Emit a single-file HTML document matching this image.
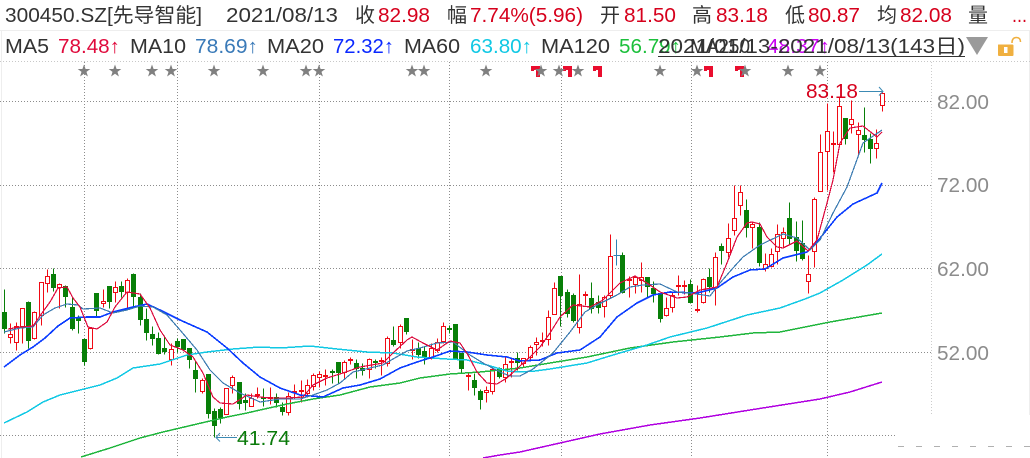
<!DOCTYPE html>
<html><head><meta charset="utf-8"><style>
html,body{margin:0;padding:0;background:#fff;width:1030px;height:458px;overflow:hidden}
svg{display:block}
text{font-family:"Liberation Sans","Noto Sans CJK SC",sans-serif;font-size:20px}
.d{fill:#333}.r{fill:#d6001c}.l{fill:#8c8c8c}
</style></head><body>
<svg width="1030" height="458" viewBox="0 0 1030 458" xmlns="http://www.w3.org/2000/svg">
<defs><path id="s" d="M0-6.5 1.6-2 6.3-2 2.5.9 3.9 5.5 0 2.7-3.9 5.5-2.5.9-6.3-2-1.6-2Z" fill="#808080"/>
<path id="f" d="M0 0H9V11H5V4H3V5H0Z" fill="#ea0d2e"/></defs>

<!-- frame / grid -->
<path d="M0 30.5H1030M1.5 30V458M1029.5 30V415" stroke="#eeeeee" fill="none"/>
<path d="M0 61.5H1030" stroke="#c8c8c8" stroke-dasharray="1 2" fill="none"/>
<g shape-rendering="crispEdges">
<path d="M0 101.5H931M0 185.5H931M0 268.5H931M0 352.5H931M0 435.5H896" stroke="#8c8c8c" stroke-dasharray="1 2" fill="none"/>
<path d="M84.5 62V458M177.5 62V458M319.5 62V458M449.5 62V458M561.5 62V458M691.5 62V458M827.5 62V458" stroke="#8c8c8c" stroke-dasharray="1 2" fill="none"/>
<path d="M931.5 62V415" stroke="#ccc" stroke-dasharray="1 2" fill="none"/>
</g>
<path d="M898 446.5H1030" stroke="#b0b0b0" stroke-dasharray="6 12" fill="none"/>

<!-- candles -->
<g transform="translate(.5 .5)" shape-rendering="crispEdges" stroke-width="1">
<path stroke="#087f08" fill="none" d="M4 289V333M28 301V348M53 268V291M65 285V307M72 297V330M78 315V333M84 338V365M96 293V317M109 286V308M121 281V297M133 273V307M140 293V325M146 308V340M152 326V345M158 332V354M164 335V354M177 338V352M183 339V350M189 348V368M195 361V392M208 374V418M214 408V437M220 407V423M239 382V409M245 393V410M263 388V406M276 393V407M282 402V415M332 369V383M338 362V383M356 359V378M362 363V375M375 359V368M393 326V346M406 318V334M418 342V358M424 346V364M449 325V333M455 324V359M461 353V373M474 373V395M480 389V409M499 367V378M517 352V370M560 276V326M567 289V317M573 293V322M591 282V313M598 295V313M622 252V293M647 277V297M653 281V302M660 293V322M690 279V303M709 268V292M721 243V264M746 199V237M759 222V266M789 202V245M796 221V261M802 220V260M845 118V144M864 107V152M870 133V163"/>
<path stroke="#087f08" fill="#087f08" d="M2 312h4V328h-4zM26 302h4V340h-4zM51 274h4V287h-4zM63 286h4V296h-4zM70 307h4V328h-4zM76 317h4V320h-4zM82 339h4V361h-4zM94 293h4V310h-4zM107 286h4V301h-4zM119 286h4V291h-4zM131 274h4V296h-4zM138 297h4V319h-4zM144 319h4V332h-4zM150 334h4V338h-4zM156 338h4V353h-4zM162 348h4V351h-4zM175 341h4V346h-4zM181 339h4V349h-4zM187 348h4V359h-4zM193 370h4V378h-4zM206 374h4V413h-4zM212 411h4V425h-4zM218 409h4V417h-4zM237 382h4V403h-4zM243 400h4V402h-4zM261 397h4V398h-4zM274 397h4V402h-4zM280 407h4V411h-4zM330 371h4V372h-4zM336 362h4V372h-4zM354 363h4V368h-4zM360 368h4V370h-4zM373 361h4V362h-4zM391 340h4V344h-4zM404 318h4V331h-4zM416 348h4V354h-4zM422 351h4V357h-4zM447 328h4V329h-4zM453 324h4V358h-4zM459 353h4V368h-4zM472 380h4V387h-4zM478 391h4V399h-4zM497 368h4V376h-4zM515 358h4V362h-4zM558 276h4V295h-4zM565 292h4V313h-4zM571 295h4V320h-4zM589 298h4V308h-4zM596 302h4V307h-4zM620 255h4V292h-4zM645 277h4V286h-4zM651 288h4V293h-4zM658 293h4V318h-4zM688 284h4V302h-4zM707 277h4V286h-4zM719 246h4V250h-4zM744 210h4V227h-4zM757 227h4V262h-4zM787 218h4V238h-4zM794 237h4V250h-4zM800 243h4V258h-4zM843 118h4V138h-4zM862 135h4V139h-4zM868 139h4V148h-4z"/>
<path stroke="#f00a14" fill="none" d="M10 323V343M16 322V350M22 308V343M34 311V339M41 282V325M47 269V292M59 283V308M90 328V349M103 289V307M115 281V302M127 278V308M171 343V365M202 378V393M226 388V414M232 375V393M251 393V406M257 387V398M270 387V404M288 392V415M294 384V398M301 380V402M307 379V397M313 373V390M319 371V387M325 369V385M344 360V378M350 357V364M369 358V378M381 357V375M387 336V366M400 324V348M412 339V359M431 343V359M437 338V352M443 322V343M468 373V390M486 386V402M492 367V394M505 357V382M511 357V377M523 358V367M530 345V360M536 337V355M542 332V346M548 310V345M554 282V314M579 274V333M585 291V305M604 295V317M610 234V297M629 276V297M635 275V293M641 262V292M666 297V316M672 292V312M678 275V295M684 280V294M697 285V312M703 278V303M715 252V305M728 223V257M734 185V235M740 185V215M752 222V248M765 253V271M771 248V267M777 224V264M783 227V247M808 255V293M814 197V267M820 134V191M827 103V190M833 131V172M839 97V145M851 100V133M858 122V156M876 129V158M882 92V111"/>
<path stroke="#f00a14" fill="#fff" d="M8 334h4V337h-4zM14 326h4V342h-4zM20 308h4V326h-4zM32 312h4V338h-4zM39 282h4V315h-4zM45 276h4V283h-4zM57 284h4V287h-4zM88 328h4V348h-4zM101 301h4V303h-4zM113 287h4V292h-4zM125 280h4V292h-4zM169 349h4V359h-4zM200 380h4V391h-4zM224 388h4V414h-4zM230 377h4V385h-4zM249 398h4V406h-4zM255 394h4V395h-4zM268 397h4V398h-4zM286 396h4V412h-4zM292 391h4V392h-4zM299 390h4V391h-4zM305 385h4V393h-4zM311 375h4V386h-4zM317 374h4V377h-4zM323 375h4V376h-4zM342 362h4V372h-4zM348 359h4V360h-4zM367 359h4V369h-4zM379 360h4V361h-4zM385 338h4V363h-4zM398 326h4V342h-4zM410 349h4V350h-4zM429 348h4V358h-4zM435 342h4V350h-4zM441 326h4V341h-4zM466 375h4V376h-4zM484 390h4V392h-4zM490 369h4V391h-4zM503 364h4V377h-4zM509 361h4V362h-4zM521 358h4V363h-4zM528 347h4V357h-4zM534 342h4V344h-4zM540 340h4V341h-4zM546 317h4V339h-4zM552 288h4V314h-4zM577 304h4V327h-4zM583 294h4V295h-4zM602 297h4V306h-4zM608 256h4V295h-4zM627 279h4V280h-4zM633 277h4V284h-4zM639 277h4V280h-4zM664 308h4V315h-4zM670 295h4V307h-4zM676 285h4V286h-4zM682 285h4V286h-4zM695 309h4V310h-4zM701 279h4V302h-4zM713 257h4V287h-4zM726 238h4V252h-4zM732 218h4V230h-4zM738 192h4V205h-4zM750 224h4V227h-4zM763 264h4V268h-4zM769 254h4V266h-4zM775 234h4V251h-4zM781 232h4V238h-4zM806 274h4V281h-4zM812 199h4V251h-4zM818 152h4V191h-4zM825 131h4V151h-4zM831 143h4V144h-4zM837 106h4V144h-4zM849 119h4V124h-4zM856 130h4V134h-4zM874 143h4V148h-4zM880 93h4V105h-4z"/>
<path stroke="#2f82b4" fill="none" d="M616 239V265M613 255H620"/>
</g>

<!-- moving averages -->
<g fill="none" stroke-width="1.2" stroke-linejoin="round" shape-rendering="crispEdges">
<polyline stroke="#b000e0" stroke-width="1.5" points="483,458 500,455 520,452 560,443 600,434 650,425 700,418 750,410 820,399 850,392 882,382"/>
<polyline stroke="#1fb53c" stroke-width="1.5" points="81,457 110,448 140,438 163,432 197,424 227,417 247,413 260,410 287,404 313,399 340,395 370,387 400,383 420,378 450,374 480,372 520,368 550,363 587,357 630,348 673,342 720,337 753,333 780,332 830,322 882,313"/>
<polyline stroke="#10c8e4" stroke-width="1.5" points="4,423 27,412 43,402 60,395 80,390 100,385 117,378 133,368 160,364 187,355 207,352 233,349 260,347 280,348 310,346 337,349 367,352 393,353 417,357 447,359 467,360 487,365 507,371 520,372 535,371 550,369 587,363 613,355 647,345 670,337 707,328 747,315 780,308 805,299 820,293 843,280 867,265 882,254"/>
<polyline stroke="#0a3cff" stroke-width="1.6" points="4,367 20,355 33,347 45,338 58,326 70,318 87,317 100,317 113,312 133,307 147,304 160,310 180,320 207,332 227,348 243,363 260,377 280,388 300,395 323,397 343,388 360,385 380,379 400,368 417,362 433,357 450,351 467,352 487,355 507,357 520,361 540,360 557,353 580,350 600,337 617,317 637,303 653,295 670,292 697,293 717,288 733,277 750,270 765,269 783,258 807,252 817,242 837,217 853,204 877,193 882,183"/>
<polyline stroke="#3a7ab0" points="4,332 20,328 33,327 43,315 55,308 67,304 78,305 83,309 100,308 113,313 127,310 140,306 153,307 167,315 180,330 197,350 210,370 223,383 240,393 260,402 280,399 300,399 313,395 327,390 340,383 353,372 370,368 383,365 393,359 407,351 420,348 437,343 453,342 470,355 483,363 500,372 510,376 520,376 533,369 553,353 570,332 585,312 597,305 617,295 630,287 643,285 660,284 677,292 690,293 710,296 720,283 733,268 743,257 760,245 783,234 797,238 810,250 820,240 833,213 847,187 863,143 882,130"/>
<polyline stroke="#dc0a3c" points="8,329 20,327 33,326 42,313 50,302 58,288 67,287 73,298 80,307 88,327 97,329 107,322 115,307 127,292 140,294 150,308 160,330 170,345 183,350 193,357 203,373 213,397 220,403 233,404 247,395 260,397 270,398 288,398 303,397 313,385 327,378 343,373 360,367 383,363 393,353 407,340 412,337 423,343 437,350 450,341 460,343 468,355 477,372 487,383 497,384 507,378 520,366 530,357 540,347 550,333 560,317 573,305 590,307 603,300 620,283 635,276 647,283 660,292 677,298 687,297 700,290 717,287 727,263 737,237 747,223 752,222 760,224 767,237 777,247 783,248 797,241 808,251 817,240 827,203 833,180 840,143 850,128 863,126 877,137 882,132"/>
</g>

<!-- annotations -->
<path d="M859 91.5H883M879 87l4 4.500-4 4M237 437.500H216M220 433l-4 4.500 4 4" stroke="#3c8ab4" fill="none"/>
<text x="806" y="98" class="r" textLength="52" lengthAdjust="spacingAndGlyphs">83.18</text>
<text x="237" y="445" fill="#0a7a0a" textLength="53" lengthAdjust="spacingAndGlyphs">41.74</text>

<!-- stars -->
<use href="#s" x="84" y="71"/><use href="#s" x="115" y="71"/><use href="#s" x="152" y="71"/><use href="#s" x="171" y="71"/><use href="#s" x="214" y="71"/><use href="#s" x="263" y="71"/><use href="#s" x="306" y="71"/><use href="#s" x="319" y="71"/><use href="#s" x="412" y="71"/><use href="#s" x="424" y="71"/><use href="#s" x="486" y="71"/>
<use href="#f" x="531" y="66"/><use href="#f" x="563" y="66"/><use href="#f" x="593" y="66"/><use href="#f" x="704" y="66"/><use href="#f" x="735" y="66"/>
<use href="#s" x="541" y="71"/><use href="#s" x="559" y="71"/><use href="#s" x="578" y="71"/><use href="#s" x="660" y="71"/><use href="#s" x="697" y="71"/><use href="#s" x="745" y="71"/><use href="#s" x="788" y="71"/><use href="#s" x="820" y="71"/>

<!-- header row -->
<text x="5" y="22" class="d" textLength="197" lengthAdjust="spacingAndGlyphs">300450.SZ[先导智能]</text>
<text x="226" y="22" class="d" textLength="112" lengthAdjust="spacingAndGlyphs">2021/08/13</text>
<text x="355" y="22" class="d" font-size="19">收</text><text x="378" y="22" class="r" textLength="52" lengthAdjust="spacingAndGlyphs">82.98</text>
<text x="447" y="22" class="d">幅</text><text x="470" y="22" class="r" textLength="113" lengthAdjust="spacingAndGlyphs">7.74%(5.96)</text>
<text x="600" y="22" class="d">开</text><text x="624" y="22" class="r" textLength="52" lengthAdjust="spacingAndGlyphs">81.50</text>
<text x="692" y="22" class="d">高</text><text x="716" y="22" class="r" textLength="52" lengthAdjust="spacingAndGlyphs">83.18</text>
<text x="785" y="22" class="d">低</text><text x="808" y="22" class="r" textLength="52" lengthAdjust="spacingAndGlyphs">80.87</text>
<text x="877" y="22" class="d">均</text><text x="900" y="22" class="r" textLength="52" lengthAdjust="spacingAndGlyphs">82.08</text>
<text x="968" y="22" class="d">量</text><text x="1012" y="22" class="r" textLength="15" lengthAdjust="spacingAndGlyphs">...</text>

<!-- MA row -->
<text x="5" y="53" class="d" textLength="44" lengthAdjust="spacingAndGlyphs">MA5</text><text x="58" y="53" fill="#e00a3c" textLength="62" lengthAdjust="spacingAndGlyphs">78.48↑</text>
<text x="130" y="53" class="d" textLength="56" lengthAdjust="spacingAndGlyphs">MA10</text><text x="195" y="53" fill="#3a7ab8" textLength="63" lengthAdjust="spacingAndGlyphs">78.69↑</text>
<text x="267" y="53" class="d" textLength="57" lengthAdjust="spacingAndGlyphs">MA20</text><text x="333" y="53" fill="#0a28ff" textLength="61" lengthAdjust="spacingAndGlyphs">72.32↑</text>
<text x="404" y="53" class="d" textLength="56" lengthAdjust="spacingAndGlyphs">MA60</text><text x="470" y="53" fill="#10c8e4" textLength="62" lengthAdjust="spacingAndGlyphs">63.80↑</text>
<text x="541" y="53" class="d" textLength="69" lengthAdjust="spacingAndGlyphs">MA120</text><text x="619" y="53" fill="#1cc03c" textLength="62" lengthAdjust="spacingAndGlyphs">56.79↑</text>
<text x="690" y="53" class="d" textLength="60" lengthAdjust="spacingAndGlyphs">MA250</text><text x="767" y="53" fill="#c800f0" textLength="63" lengthAdjust="spacingAndGlyphs">48.37↑</text>
<text x="658" y="53" class="d" textLength="307" lengthAdjust="spacingAndGlyphs">2021/01/13-2021/08/13(143日)</text>
<path d="M658 56.500H965" stroke="#333" fill="none"/>

<!-- triangle + lock -->
<path d="M966 37H988L977 55Z" fill="#9a9a9a"/>
<path d="M998.500 44.500H1012.500C1013 44.500 1013.500 45 1013.500 45.500V55C1013.500 55.500 1013 56 1012.500 56H999C998.500 56 998 55.500 998 55V45C998 44.800 998.200 44.500 998.500 44.500Z" fill="#f0b040"/>
<rect x="1004" y="47" width="3.500" height="6" fill="#fff"/>
<path d="M1012 43C1012 39 1014 37.500 1016.500 37.500C1019 37.500 1020.500 39 1020.500 42" fill="none" stroke="#f0b040" stroke-width="1.600"/>

<!-- axis labels -->
<text x="937" y="109" class="l" textLength="52" lengthAdjust="spacingAndGlyphs">82.00</text>
<text x="937" y="192" class="l" textLength="52" lengthAdjust="spacingAndGlyphs">72.00</text>
<text x="937" y="276" class="l" textLength="52" lengthAdjust="spacingAndGlyphs">62.00</text>
<text x="937" y="360" class="l" textLength="52" lengthAdjust="spacingAndGlyphs">52.00</text>
</svg>
</body></html>
